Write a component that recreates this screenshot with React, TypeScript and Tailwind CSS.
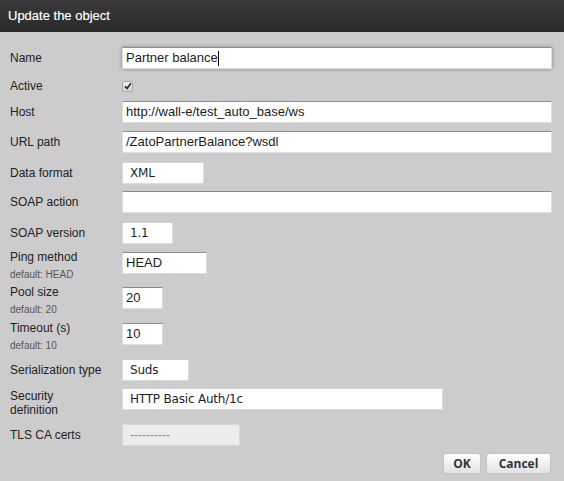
import React from 'react';

// Zato-style "Update the object" dialog

type Row = {
  label: string;
  hint?: string;
  kind: 'text' | 'select' | 'check' | 'disabled';
  value?: string;
  width?: string;
  mt: string;
  focus?: boolean;
  twoLine?: boolean;
};

const rows: Row[] = [
  { label: 'Name', kind: 'text', value: 'Partner balance', width: 'w-[430px]', mt: 'mt-[15px]', focus: true },
  { label: 'Active', kind: 'check', mt: 'mt-[6px]' },
  { label: 'Host', kind: 'text', value: 'http://wall-e/test_auto_base/ws', width: 'w-[430px]', mt: 'mt-[4px]' },
  { label: 'URL path', kind: 'text', value: '/ZatoPartnerBalance?wsdl', width: 'w-[430px]', mt: 'mt-[8px]' },
  { label: 'Data format', kind: 'select', value: 'XML', width: 'w-[82px]', mt: 'mt-[9px]' },
  { label: 'SOAP action', kind: 'text', value: '', width: 'w-[430px]', mt: 'mt-[7px]' },
  { label: 'SOAP version', kind: 'select', value: '1.1', width: 'w-[51px]', mt: 'mt-[9px]' },
  { label: 'Ping method', hint: 'default: HEAD', kind: 'text', value: 'HEAD', width: 'w-[85px]', mt: 'mt-[8px]' },
  { label: 'Pool size', hint: 'default: 20', kind: 'text', value: '20', width: 'w-[41px]', mt: 'mt-[13px]' },
  { label: 'Timeout (s)', hint: 'default: 10', kind: 'text', value: '10', width: 'w-[41px]', mt: 'mt-[14px]' },
  { label: 'Serialization type', kind: 'select', value: 'Suds', width: 'w-[67px]', mt: 'mt-[14px]' },
  { label: 'Security definition', kind: 'select', value: 'HTTP Basic Auth/1c', width: 'w-[321px]', mt: 'mt-[7px]', twoLine: true },
  { label: 'TLS CA certs', kind: 'disabled', value: '----------', width: 'w-[118px]', mt: 'mt-[14px]' },
];

function Field({ row }: { row: Row }) {
  if (row.kind === 'check') {
    return (
      <span className="flex items-center justify-center w-[11px] h-[11px] rounded-[2px] border border-[#a9a9a9] bg-gradient-to-b from-[#eeeeee] to-[#d6d6d6]">
        <svg width="8" height="8" viewBox="0 0 8 8">
          <path d="M1 4.2 L3 6.4 L7 1.2" fill="none" stroke="#2a2a2a" strokeWidth="1.7" />
        </svg>
      </span>
    );
  }
  if (row.kind === 'select') {
    return (
      <div className={`${row.width} h-[22px] bg-white border border-[#dcdcdc] border-t-[#d0d0d0] flex items-center pl-[7px] text-[12px] text-[#1a1f33] font-['DejaVu_Sans',sans-serif] tracking-[-0.2px]`}>
        {row.value}
      </div>
    );
  }
  if (row.kind === 'disabled') {
    return (
      <div className={`${row.width} h-[22px] bg-[#ececec] border border-[#d8d8d8] flex items-center pl-[7px] text-[12px] text-[#8a8a8a] font-['Liberation_Sans',sans-serif]`}>
        {row.value}
      </div>
    );
  }
  return (
    <div
      className={`${row.width} h-[22px] bg-white border border-[#dedede] border-t-[#8c8c8c] flex items-center pl-[3px] text-[13px] text-[#1c1c1c] ${
        row.focus ? 'shadow-[0_0_4px_rgba(0,0,0,0.35)]' : ''
      }`}
    >
      {row.value}
      {row.focus && <span className="w-px h-[15px] bg-black" />}
    </div>
  );
}

export default function App() {
  return (
    <div className="w-[564px] h-[481px] bg-[#cccccc] font-['Liberation_Sans',Arial,sans-serif] text-[#222] overflow-hidden">
      {/* Title bar */}
      <div className="h-[32px] bg-gradient-to-b from-[#3a3a3a] to-[#2a2a2a] flex items-center pl-[8px]">
        <span className="text-white text-[13px] [text-shadow:0_0_1px_rgba(255,255,255,0.4)]">Update the object</span>
      </div>

      <div className="flex flex-col">
        {rows.map((row) => (
          <div key={row.label} className={`flex items-center h-[22px] ${row.mt}`}>
            <div className={`w-[122px] pl-[10px] shrink-0 ${row.hint ? 'translate-y-[2px]' : ''}`}>
              {row.twoLine ? (
                <div className="text-[12px] leading-[14px] w-[70px] translate-y-[4px]">{row.label}</div>
              ) : (
                <div className="text-[12px] leading-[14px]">{row.label}</div>
              )}
              {row.hint && (
                <div className="text-[10px] leading-[12px] mt-[5px] text-[#555]">{row.hint}</div>
              )}
            </div>
            <Field row={row} />
          </div>
        ))}

        {/* Buttons */}
        <div className="flex justify-end gap-[5px] pr-[13px] mt-[7px]">
          <button className="w-[38px] h-[21px] rounded-[3px] border border-[#c4c4c4] bg-gradient-to-b from-white to-[#e2e2e2] text-[12px] font-bold text-[#2e3440] font-['Open_Sans',sans-serif]">
            OK
          </button>
          <button className="w-[65px] h-[21px] rounded-[3px] border border-[#c4c4c4] bg-gradient-to-b from-white to-[#e2e2e2] text-[12px] font-bold text-[#2e3440] font-['Open_Sans',sans-serif]">
            Cancel
          </button>
        </div>
      </div>
    </div>
  );
}
